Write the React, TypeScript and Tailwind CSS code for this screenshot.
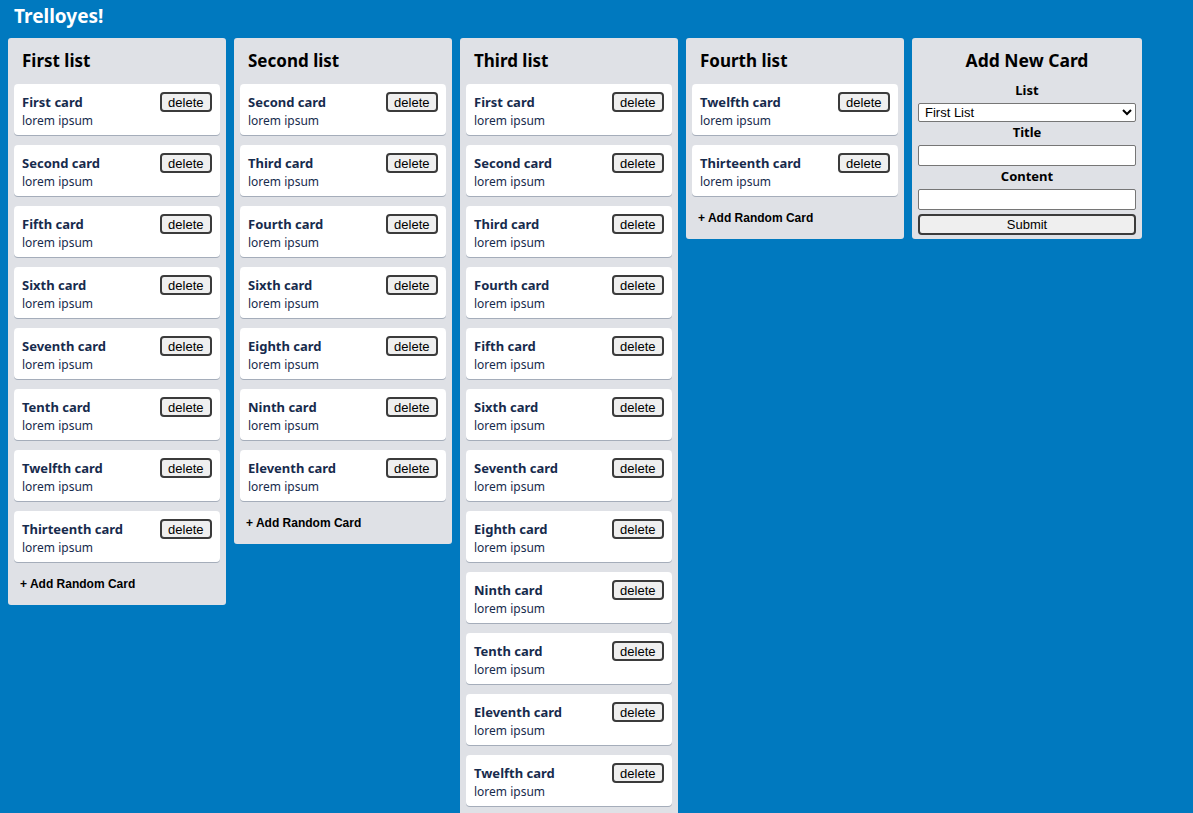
import { useState } from "react"

const lists = [
  {
    title: "First list",
    cards: ["First card", "Second card", "Fifth card", "Sixth card", "Seventh card", "Tenth card", "Twelfth card", "Thirteenth card"],
  },
  {
    title: "Second list",
    cards: ["Second card", "Third card", "Fourth card", "Sixth card", "Eighth card", "Ninth card", "Eleventh card"],
  },
  {
    title: "Third list",
    cards: [
      "First card",
      "Second card",
      "Third card",
      "Fourth card",
      "Fifth card",
      "Sixth card",
      "Seventh card",
      "Eighth card",
      "Ninth card",
      "Tenth card",
      "Eleventh card",
      "Twelfth card",
      "Thirteenth card",
    ],
  },
  {
    title: "Fourth list",
    cards: ["Twelfth card", "Thirteenth card"],
  },
]

const ui = { fontFamily: '"Noto Sans", "Open Sans", sans-serif' }
const arial = { fontFamily: '"Liberation Sans", Arial, sans-serif' }

function Card({ title }: { title: string }) {
  return (
    <div className="bg-white rounded-[4px] shadow-[0_1px_0_#a5adba] px-2 pt-[9px] pb-[5px] flex justify-between items-start">
      <div className="text-[#172b4d]">
        <h3 className="text-[13px] font-bold leading-[18px]">{title}</h3>
        <p className="text-[12px] leading-[18px] pt-[1px]">lorem ipsum</p>
      </div>
      <button
        style={arial}
        className="text-[13px] leading-[15px] text-black bg-[#efefef] border-2 border-[#3b3b3b] rounded-[4px] px-[6.5px] h-[20px] -mt-[1px]"
      >
        delete
      </button>
    </div>
  )
}

export default function App() {
  const [list, setList] = useState("first")

  return (
    <div style={ui} className="min-h-screen bg-[#0079bf]">
      <h1 className="text-white text-[19px] font-bold px-[14px] pt-[3px] h-[38px] leading-[26px]">Trelloyes!</h1>

      <div className="flex items-start gap-2 px-2">
        {lists.map((l) => (
          <div key={l.title} className="w-[218px] bg-[#dfe1e6] rounded-[3px] px-[6px]">
            <h2 className="text-[17px] font-bold text-black px-2 h-[46px] flex items-center">{l.title}</h2>
            <div className="flex flex-col gap-[10px]">
              {l.cards.map((c, i) => (
                <Card key={i} title={c} />
              ))}
            </div>
            <button style={arial} className="text-[12px] font-bold text-black h-[43px] ml-[6px]">
              + Add Random Card
            </button>
          </div>
        ))}

        <div className="w-[230px] bg-[#dfe1e6] rounded-[3px] px-[6px] pb-[4px] flex flex-col items-center text-black">
          <h2 className="text-[17.5px] font-bold h-[44px] flex items-center">Add New Card</h2>
          <label className="text-[13px] font-bold leading-[16px] mb-[5px]">List</label>
          <select
            value={list}
            onChange={(e) => setList(e.target.value)}
            style={arial}
            className="w-full h-[19px] text-[13px] leading-[15px] bg-white border border-[#767676] rounded-[2px] pl-[2px]"
          >
            <option value="first">First List</option>
            <option value="second">Second List</option>
            <option value="third">Third List</option>
            <option value="fourth">Fourth List</option>
          </select>
          <label className="text-[13px] font-bold leading-[16px] mt-[2px] mb-[5px]">Title</label>
          <input className="w-full h-[21px] bg-white border border-[#767676] rounded-[2px]" />
          <label className="text-[13px] font-bold leading-[16px] mt-[2px] mb-[5px]">Content</label>
          <input className="w-full h-[21px] bg-white border border-[#767676] rounded-[2px]" />
          <button
            style={arial}
            className="w-full h-[21px] mt-[4px] text-[13px] leading-[15px] bg-[#efefef] border-2 border-[#3b3b3b] rounded-[4px]"
          >
            Submit
          </button>
        </div>
      </div>
    </div>
  )
}
